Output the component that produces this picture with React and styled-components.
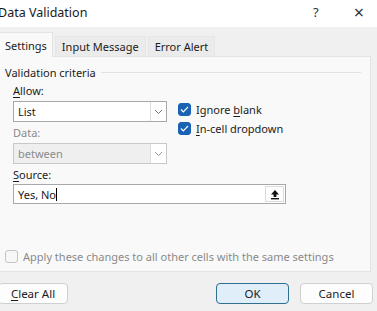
import React from 'react';
import styled, { createGlobalStyle } from 'styled-components';

const Global = createGlobalStyle`
  html, body { margin: 0; padding: 0; }
  body {
    width: 377px;
    height: 311px;
    overflow: hidden;
    background: #f0f0f0;
    font-family: "Noto Sans", "Open Sans", sans-serif;
    font-size: 11px;
    color: #1b1b1b;
  }
`;

const Window = styled.div`
  width: 377px;
  height: 311px;
  display: flex;
  flex-direction: column;
  background: #f0f0f0;
`;

const TitleBar = styled.div`
  height: 27px;
  background: #fff;
  display: flex;
  align-items: center;
  padding: 0 13px 0 0;
  margin-left: -2px;
`;

const Title = styled.div`
  flex: 1;
  font-size: 12.5px;
  color: #1a1a1a;
  margin-top: -3px;
`;

const TitleBtn = styled.span`
  font-size: ${p => p.$size || 13}px;
  line-height: 1;
  color: #333;
  margin-left: ${p => p.$gap || 0}px;
  margin-top: -3px;
`;

const TabRow = styled.div`
  display: flex;
  align-items: flex-end;
  height: 29px;
`;

const Tab = styled.div`
  height: ${p => (p.$active ? 24 : 19)}px;
  padding: 0 ${p => (p.$active ? 5 : 6)}px;
  margin-right: 2px;
  background: ${p => (p.$active ? '#f9f9f9' : '#ebebeb')};
  border: 1px solid ${p => (p.$active ? '#e3e3e3' : '#e6e6e6')};
  border-bottom: none;
  border-left: ${p => (p.$active ? 'none' : undefined)};
  display: flex;
  align-items: center;
  color: #1b1b1b;
  margin-bottom: ${p => (p.$active ? -1 : 0)}px;
  position: relative;
  z-index: ${p => (p.$active ? 1 : 0)};
`;

const Panel = styled.div`
  width: 371px;
  height: 216px;
  background: #f9f9f9;
  border: 1px solid #e3e3e3;
  border-left: none;
  display: flex;
  flex-direction: column;
  box-sizing: border-box;
  padding: 6px 0 0 5px;
`;

const Group = styled.div`
  display: flex;
  align-items: center;
  gap: 5px;
  height: 18px;
  &::after {
    content: '';
    flex: 1;
    height: 1px;
    background: #e2e2e2;
    margin-right: 9px;
  }
`;

const Criteria = styled.div`
  display: flex;
  padding-left: 8px;
  gap: 11px;
`;

const Column = styled.div`
  display: flex;
  flex-direction: column;
`;

const Label = styled.div`
  height: 14px;
  margin-top: ${p => p.$top || 0}px;
  line-height: 14px;
  color: ${p => (p.$disabled ? '#8a8a8a' : '#1b1b1b')};
  u { text-decoration-thickness: 1px; text-underline-offset: 2px; }
`;

const Select = styled.div`
  width: 154px;
  height: 21px;
  box-sizing: border-box;
  margin-top: 3px;
  border: 1px solid ${p => (p.$disabled ? '#c8c8c8' : '#a8a8a8')};
  background: ${p => (p.$disabled ? '#efefef' : '#fff')};
  display: flex;
  align-items: center;
  color: ${p => (p.$disabled ? '#8c8c8c' : '#1b1b1b')};
`;

const SelectText = styled.div`
  flex: 1;
  padding-left: 4px;
`;

const Arrow = styled.div`
  width: 15px;
  height: 100%;
  border-left: 1px solid #dcdcdc;
  display: flex;
  align-items: center;
  justify-content: center;
  background: #fff;
`;

const Checks = styled.div`
  display: flex;
  flex-direction: column;
  gap: 6px;
  padding-top: 22px;
`;

const CheckRow = styled.label`
  display: flex;
  align-items: center;
  gap: 5px;
  height: 13px;
  color: ${p => (p.$disabled ? '#8a8a8a' : '#1b1b1b')};
  u { text-decoration-thickness: 1px; text-underline-offset: 2px; }
`;

const Box = styled.span`
  width: 13px;
  height: 13px;
  box-sizing: border-box;
  border-radius: 3px;
  background: ${p => (p.$checked ? '#1a62b4' : '#f7f7f7')};
  border: 1px solid ${p => (p.$checked ? '#1a62b4' : '#c4c4c4')};
  display: flex;
  align-items: center;
  justify-content: center;
`;

const SourceWrap = styled.div`
  padding-left: 8px;
  display: flex;
  flex-direction: column;
`;

const SourceInput = styled.div`
  width: 273px;
  height: 20px;
  box-sizing: border-box;
  margin-top: 2px;
  border: 1px solid #a8a8a8;
  background: #fff;
  display: flex;
  align-items: center;
`;

const SourceText = styled.div`
  flex: 1;
  padding-left: 4px;
  span {
    display: inline-block;
    width: 1px;
    height: 13px;
    background: #000;
    vertical-align: -2px;
  }
`;

const RefBtn = styled.div`
  width: 19px;
  height: 16px;
  margin-right: 1px;
  border: 1px solid #dcdcdc;
  box-sizing: border-box;
  display: flex;
  align-items: center;
  justify-content: center;
  background: #fdfdfd;
`;

const ApplyRow = styled.div`
  margin-top: auto;
  padding: 0 0 8px 0;
`;

const Footer = styled.div`
  display: flex;
  align-items: center;
  padding: 11px 4px 0 0;
  margin-left: -2px;
`;

const Button = styled.button`
  width: ${p => p.$w || 73}px;
  height: 21px;
  margin-left: ${p => p.$ml || 0}px;
  box-sizing: border-box;
  border-radius: 4px;
  font-family: inherit;
  font-size: 11.5px;
  color: #1b1b1b;
  padding: 0;
  background: ${p => (p.$primary ? '#e0eef9' : '#fdfdfd')};
  border: 1px solid ${p => (p.$primary ? '#2f6f91' : '#d0d0d0')};
  u { text-decoration-thickness: 1px; text-underline-offset: 2px; }
`;

const Chevron = ({ color = '#777' }) => (
  <svg width="9" height="6" viewBox="0 0 9 6">
    <path d="M1 1l3.5 3.5L8 1" fill="none" stroke={color} strokeWidth="1" />
  </svg>
);

const Tick = () => (
  <svg width="9" height="7" viewBox="0 0 9 7">
    <path d="M1 3.5l2.3 2.3L8 1" fill="none" stroke="#fff" strokeWidth="1.2" />
  </svg>
);

const UpArrow = () => (
  <svg width="10" height="11" viewBox="0 0 10 11">
    <path d="M5 1L1 5.5h2.6V8h2.8V5.5H9z" fill="#111" />
    <rect x="1" y="9" width="8" height="1.4" fill="#111" />
  </svg>
);

export default function App() {
  return (
    <>
      <Global />
      <Window>
        <TitleBar>
          <Title>Data Validation</Title>
          <TitleBtn>?</TitleBtn>
          <TitleBtn $size={18} $gap={35}>×</TitleBtn>
        </TitleBar>

        <TabRow>
          <Tab $active>Settings</Tab>
          <Tab>Input Message</Tab>
          <Tab>Error Alert</Tab>
        </TabRow>

        <Panel>
          <Group>Validation criteria</Group>

          <Criteria>
            <Column>
              <Label $top={3}><u>A</u>llow:</Label>
              <Select>
                <SelectText>List</SelectText>
                <Arrow><Chevron /></Arrow>
              </Select>
              <Label $top={4} $disabled>Data:</Label>
              <Select $disabled>
                <SelectText>between</SelectText>
                <Arrow><Chevron color="#999" /></Arrow>
              </Select>
            </Column>
            <Checks>
              <CheckRow>
                <Box $checked><Tick /></Box>
                <span>Ignore <u>b</u>lank</span>
              </CheckRow>
              <CheckRow>
                <Box $checked><Tick /></Box>
                <span><u>I</u>n-cell dropdown</span>
              </CheckRow>
            </Checks>
          </Criteria>

          <SourceWrap>
            <Label $top={4}><u>S</u>ource:</Label>
            <SourceInput>
              <SourceText>Yes, No<span /></SourceText>
              <RefBtn><UpArrow /></RefBtn>
            </SourceInput>
          </SourceWrap>

          <ApplyRow>
            <CheckRow $disabled>
              <Box />
              <span>Apply these changes to all other cells with the same settings</span>
            </CheckRow>
          </ApplyRow>
        </Panel>

        <Footer>
          <Button $w={70}><u>C</u>lear All</Button>
          <Button $primary $ml={148}>OK</Button>
          <Button $ml={11}>Cancel</Button>
        </Footer>
      </Window>
    </>
  );
}
